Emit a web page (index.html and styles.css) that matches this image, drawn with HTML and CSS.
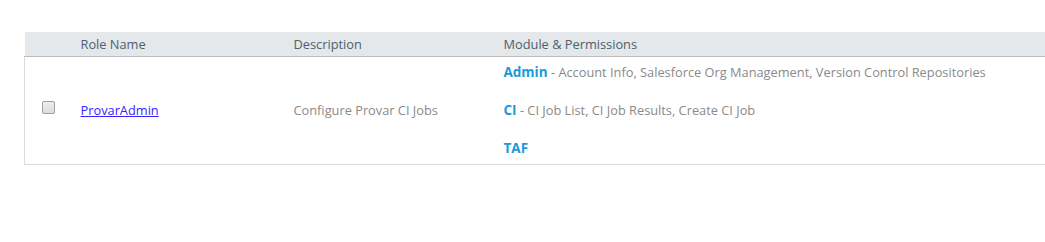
FILE: index.html
```html
<!DOCTYPE html>
<html>
<head>
<meta charset="utf-8">
<link rel="stylesheet" href="styles.css">
</head>
<body>
<div class="page">
  <table class="roles">
    <thead>
      <tr>
        <th class="c-check"></th>
        <th class="c-name">Role Name</th>
        <th class="c-desc">Description</th>
        <th class="c-mod">Module &amp; Permissions</th>
      </tr>
    </thead>
    <tbody>
      <tr>
        <td class="c-check"><input type="checkbox" class="chk"></td>
        <td class="c-name"><a href="#" class="role-link">ProvarAdmin</a></td>
        <td class="c-desc">Configure Provar CI Jobs</td>
        <td class="c-mod">
          <div class="mod"><span class="mod-name">Admin</span> - Account Info, Salesforce Org Management, Version Control Repositories</div>
          <div class="mod"><span class="mod-name">CI</span> - CI Job List, CI Job Results, Create CI Job</div>
          <div class="mod"><span class="mod-name">TAF</span></div>
        </td>
      </tr>
    </tbody>
  </table>
</div>
</body>
</html>
```
FILE: styles.css
```css
html, body {
  margin: 0;
  padding: 0;
  background: #ffffff;
  overflow: hidden;
}
.page {
  padding: 32px 0 0 24px;
  font-family: "Open Sans", "Noto Sans", sans-serif;
  font-size: 12.8px;
}
.roles {
  border-collapse: collapse;
  width: 1021px;
  table-layout: fixed;
}
.roles th {
  background: #e4e8ea;
  color: #4f5f6f;
  font-weight: normal;
  text-align: left;
  height: 24px;
  line-height: 18px;
  padding: 0 0 0 12px;
  border-bottom: 1px solid #bcbcbc;
  vertical-align: middle;
}
.roles td {
  padding: 6px 0 7px 12px;
  color: #8a8a8a;
  vertical-align: middle;
  line-height: 18px;
  border-bottom: 1px solid #dcdcdc;
}
.roles tbody td:first-child {
  border-left: 1px solid #dcdcdc;
}
.c-check { width: 32px; }
.c-name { width: 201px; }
.c-desc { width: 198px; }
.c-mod { width: auto; }
.roles td.c-check { padding-left: 17px; }
.chk {
  -webkit-appearance: none;
  appearance: none;
  margin: 0 0 5px 0;
  width: 13px;
  height: 13px;
  display: block;
  box-sizing: border-box;
  border: 1px solid #a0a0a0;
  border-radius: 2px;
  background: linear-gradient(#eeeeee, #dcdcdc);
}
.role-link {
  color: #3a22ff;
  text-decoration: underline;
}
.mod {
  height: 18px;
  line-height: 18px;
  margin-bottom: 20px;
  white-space: nowrap;
}
.mod:last-child { margin-bottom: 0; }
.mod-name {
  color: #1b9ad6;
  font-weight: bold;
  font-size: 13.5px;
  line-height: 18px;
}
```
